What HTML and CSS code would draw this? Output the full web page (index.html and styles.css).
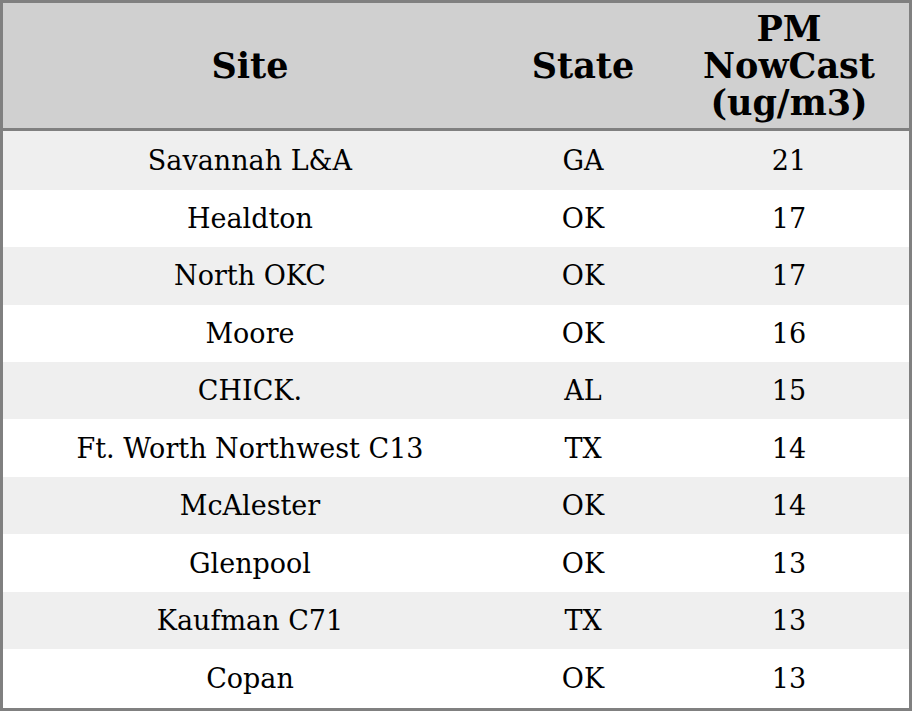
FILE: index.html
```html
<!DOCTYPE html>
<html>
<head>
<meta charset="utf-8">
<link rel="stylesheet" href="styles.css">
</head>
<body>
<table class="aq">
  <thead>
    <tr>
      <th class="c-site">Site</th>
      <th class="c-state">State</th>
      <th class="c-pm">PM<br>NowCast<br>(ug/m3)</th>
    </tr>
  </thead>
  <tbody>
    <tr><td>Savannah L&amp;A</td><td>GA</td><td>21</td></tr>
    <tr><td>Healdton</td><td>OK</td><td>17</td></tr>
    <tr><td>North OKC</td><td>OK</td><td>17</td></tr>
    <tr><td>Moore</td><td>OK</td><td>16</td></tr>
    <tr><td>CHICK.</td><td>AL</td><td>15</td></tr>
    <tr><td>Ft. Worth Northwest C13</td><td>TX</td><td>14</td></tr>
    <tr><td>McAlester</td><td>OK</td><td>14</td></tr>
    <tr><td>Glenpool</td><td>OK</td><td>13</td></tr>
    <tr><td>Kaufman C71</td><td>TX</td><td>13</td></tr>
    <tr><td>Copan</td><td>OK</td><td>13</td></tr>
  </tbody>
</table>
</body>
</html>
```
FILE: styles.css
```css
html, body {
  margin: 0;
  padding: 0;
  background: #ffffff;
}
.aq {
  width: 912px;
  height: 711px;
  border-collapse: collapse;
  border: 3px solid #808080;
  font-family: "DejaVu Serif", serif;
  color: #000;
  table-layout: fixed;
}
.aq th {
  background: #d0d0d0;
  font-size: 35px;
  line-height: 37px;
  font-weight: bold;
  text-align: center;
  padding: 6px 0 7px;
  border-bottom: 3px solid #808080;
  height: 112px;
}
.c-site { width: 494px; }
.c-state { width: 172px; }
.aq td {
  font-size: 27px;
  text-align: center;
  padding: 0;
}
.aq tbody tr:nth-child(odd) td {
  background: #efefef;
}
```
